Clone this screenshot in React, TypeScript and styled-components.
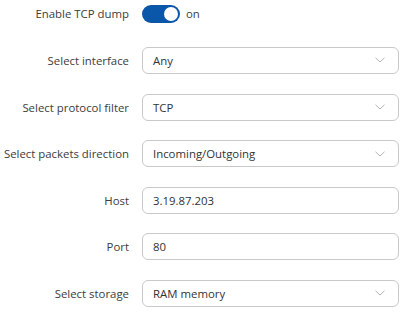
import React, { useState } from 'react';
import styled, { createGlobalStyle } from 'styled-components';

const GlobalStyle = createGlobalStyle`
  html, body {
    margin: 0;
    padding: 0;
    background: #ffffff;
  }
  body {
    font-family: 'Open Sans', 'Noto Sans', sans-serif;
    color: #3a3a3a;
  }
`;

const Form = styled.div`
  display: flex;
  flex-direction: column;
  gap: 19.6px;
  padding: 0.4px 14px 0 0;
  width: 413px;
  box-sizing: border-box;
`;

const Row = styled.div`
  display: grid;
  grid-template-columns: 129px 257px;
  column-gap: 13px;
  align-items: center;
  height: 27px;
`;

const Label = styled.label`
  text-align: right;
  font-size: 11.4px;
  color: #3c3c3c;
  white-space: nowrap;
`;

const Field = styled.div`
  position: relative;
  height: 27px;
  box-sizing: border-box;
  border: 1px solid #c9c9c9;
  border-radius: 6px;
  display: flex;
  align-items: center;
  padding: 0 10px;
  font-size: 11.4px;
  color: #333333;
`;

const Chevron = styled.svg`
  position: absolute;
  right: 13px;
  top: 50%;
  transform: translateY(-50%);
`;

const ToggleWrap = styled.div`
  display: flex;
  align-items: center;
  gap: 6px;
  font-size: 11.4px;
  color: #3c3c3c;
`;

const Track = styled.button<{ $on: boolean }>`
  width: 38px;
  height: 18px;
  border: none;
  padding: 0;
  border-radius: 9px;
  background: ${({ $on }) => ($on ? '#0a56a8' : '#c9c9c9')};
  position: relative;
  cursor: pointer;
`;

const Knob = styled.span<{ $on: boolean }>`
  position: absolute;
  top: 2px;
  left: ${({ $on }) => ($on ? '22px' : '2px')};
  width: 14px;
  height: 14px;
  border-radius: 50%;
  background: #ffffff;
`;

const ChevronIcon = () => (
  <Chevron width="10" height="6" viewBox="0 0 10 6">
    <path d="M0.5 0.8 L5 5 L9.5 0.8" fill="none" stroke="#b3b3b3" strokeWidth="1" />
  </Chevron>
);

const fields = [
  { label: 'Select interface', value: 'Any', select: true },
  { label: 'Select protocol filter', value: 'TCP', select: true },
  { label: 'Select packets direction', value: 'Incoming/Outgoing', select: true },
  { label: 'Host', value: '3.19.87.203', select: false },
  { label: 'Port', value: '80', select: false },
  { label: 'Select storage', value: 'RAM memory', select: true },
];

export default function App() {
  const [on, setOn] = useState(true);

  return (
    <>
      <GlobalStyle />
      <Form>
        <Row>
          <Label>Enable TCP dump</Label>
          <ToggleWrap>
            <Track $on={on} onClick={() => setOn(!on)}>
              <Knob $on={on} />
            </Track>
            {on ? 'on' : 'off'}
          </ToggleWrap>
        </Row>
        {fields.map((f) => (
          <Row key={f.label}>
            <Label>{f.label}</Label>
            <Field>
              {f.value}
              {f.select && <ChevronIcon />}
            </Field>
          </Row>
        ))}
      </Form>
    </>
  );
}
